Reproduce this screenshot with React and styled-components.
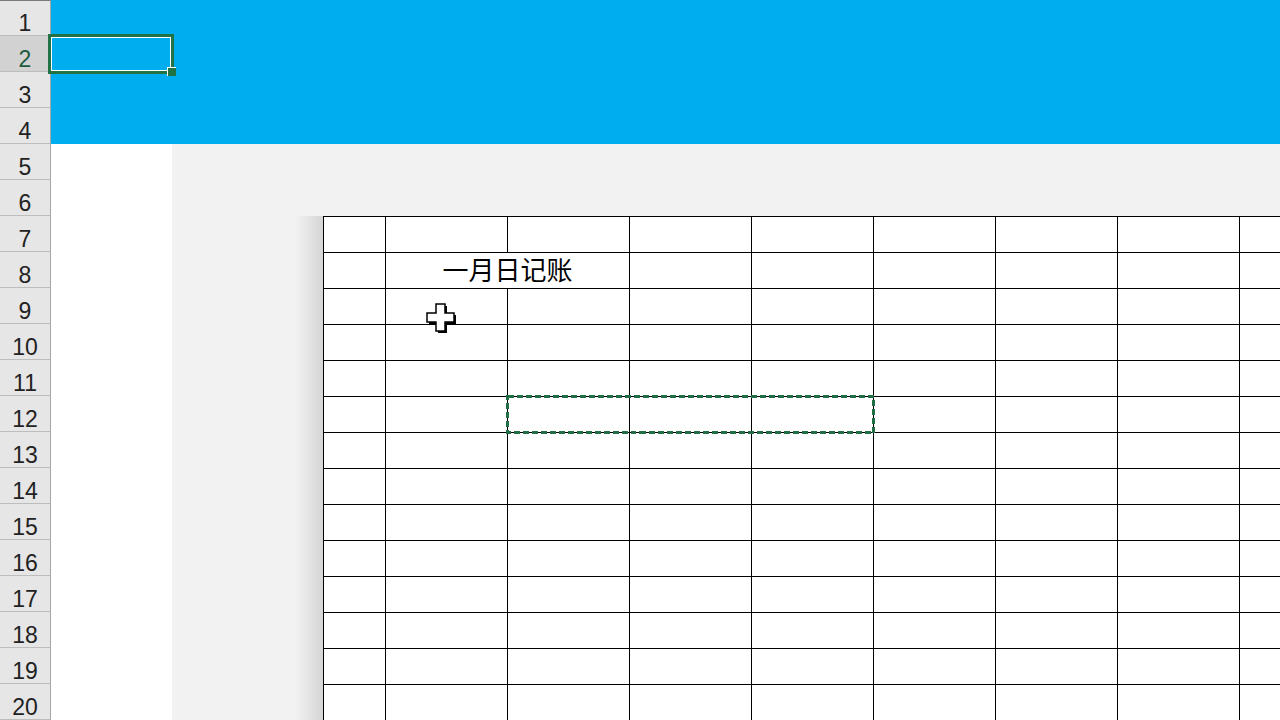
import React from 'react'
import styled, { createGlobalStyle } from 'styled-components'

const Global = createGlobalStyle`
  html, body {
    margin: 0;
    padding: 0;
    background: #fff;
    overflow: hidden;
  }
`

const ROWS = Array.from({ length: 20 }, (_, i) => i + 1)
const GRID_ROWS = Array.from({ length: 14 }, (_, i) => i + 7)
const COLS = 9

const App = () => {
  return (
    <Page>
      <Global />
      <RowHeader>
        {ROWS.map(n => (
          <RowNum key={n} $active={n === 2}>{n}</RowNum>
        ))}
      </RowHeader>
      <Sheet>
        <Banner />
        <Body>
          <ColumnA />
          <Canvas>
            <TableWrap>
              <Grid>
                {GRID_ROWS.map(r =>
                  r === 8 ? (
                    <React.Fragment key={r}>
                      <Cell />
                      <Cell $span={2}>一月日记账</Cell>
                      {Array.from({ length: COLS - 3 }, (_, c) => <Cell key={c} />)}
                    </React.Fragment>
                  ) : (
                    <React.Fragment key={r}>
                      {Array.from({ length: COLS }, (_, c) => <Cell key={c} />)}
                    </React.Fragment>
                  )
                )}
              </Grid>
              <Marquee width="369" height="39" viewBox="0 0 369 39">
                <rect x="1.5" y="1.5" width="366" height="36" fill="none" stroke="#1f6e45" strokeWidth="2.5" strokeDasharray="6 3" shapeRendering="crispEdges" />
              </Marquee>
              <Cursor width="34" height="36" viewBox="0 0 34 36">
                <path d="M12 3h9v9h9v9h-9v9h-9v-9H3v-9h9z" fill="#000" />
                <path d="M10 1h9v9h9v9h-9v9h-9v-9H1v-9h9z" fill="#fff" stroke="#000" strokeWidth="1.5" />
              </Cursor>
            </TableWrap>
          </Canvas>
        </Body>
      </Sheet>
      <ActiveCell>
        <FillHandle />
      </ActiveCell>
    </Page>
  )
}

const Page = styled.div`
  position: relative;
  display: flex;
  width: 1280px;
  height: 720px;
  overflow: hidden;
  font-family: "Liberation Sans", Arial, sans-serif;
`

const RowHeader = styled.div`
  display: flex;
  flex-direction: column;
  width: 50px;
  flex: none;
  background: #e6e6e6;
  border-right: 1px solid #a6a6a6;
  border-top: 1px solid #7a7a7a;
`

const RowNum = styled.div`
  box-sizing: border-box;
  height: 36px;
  flex: none;
  padding-top: 10px;
  line-height: 26px;
  font-size: 23px;
  text-align: center;
  color: ${p => (p.$active ? '#1d5a3f' : '#222')};
  background: ${p => (p.$active ? '#d2d2d2' : 'transparent')};
  border-bottom: 1px solid #bdbdbd;
  &:first-child {
    height: 35px;
    padding-top: 9px;
  }
`

const Sheet = styled.div`
  flex: 1;
  display: flex;
  flex-direction: column;
  min-width: 0;
`

const Banner = styled.div`
  height: 144px;
  flex: none;
  background: #00aeef;
`

const Body = styled.div`
  flex: 1;
  display: flex;
  min-height: 0;
`

const ColumnA = styled.div`
  width: 121px;
  flex: none;
  background: #fff;
`

const Canvas = styled.div`
  flex: 1;
  background: #f2f2f2;
  padding: 72px 0 0 151px;
  overflow: hidden;
`

const TableWrap = styled.div`
  position: relative;
  width: max-content;
  &::before {
    content: '';
    position: absolute;
    top: 0;
    bottom: 0;
    left: -28px;
    width: 28px;
    background: linear-gradient(to right, rgba(0, 0, 0, 0), rgba(0, 0, 0, 0.12));
  }
`

const Grid = styled.div`
  display: grid;
  grid-template-columns: 62px repeat(8, 122px);
  grid-auto-rows: 36px;
  background: #fff;
  border-top: 1px solid #000;
  border-left: 1px solid #000;
`

const Cell = styled.div`
  box-sizing: border-box;
  border-right: 1px solid #000;
  border-bottom: 1px solid #000;
  grid-column: span ${p => p.$span || 1};
  display: flex;
  align-items: center;
  justify-content: center;
  padding-bottom: 4px;
  white-space: nowrap;
  font-family: "Noto Sans CJK SC", "Liberation Sans", sans-serif;
  font-size: 26px;
  color: #000;
`

const Marquee = styled.svg`
  position: absolute;
  left: 183px;
  top: 179px;
`

const Cursor = styled.svg`
  position: absolute;
  left: 103px;
  top: 87px;
`

const ActiveCell = styled.div`
  position: absolute;
  left: 48px;
  top: 34px;
  width: 126px;
  height: 40px;
  box-sizing: border-box;
  border: 3px solid #217346;
  box-shadow: inset 0 0 0 1px #fff;
`

const FillHandle = styled.div`
  position: absolute;
  left: 116px;
  top: 30px;
  width: 8px;
  height: 8px;
  background: #217346;
  border-left: 1px solid #fff;
  border-top: 1px solid #fff;
`

export default App
